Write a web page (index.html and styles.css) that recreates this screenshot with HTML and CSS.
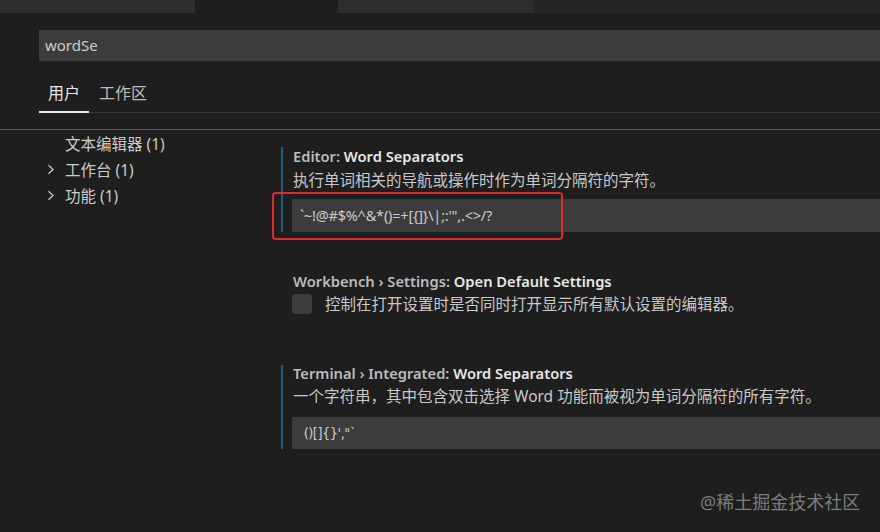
FILE: index.html
```html
<!DOCTYPE html>
<html lang="zh-CN">
<head>
<meta charset="utf-8">
<link rel="stylesheet" href="styles.css">
</head>
<body>
<div class="tabs">
  <div class="tab"></div>
  <div class="tab-gap"></div>
  <div class="tab"></div>
  <div class="tab-rest"></div>
</div>
<div class="search">wordSe</div>
<div class="scopes">
  <div class="scope active">用户</div>
  <div class="scope">工作区</div>
</div>
<div class="divider"></div>
<div class="main">
  <div class="toc">
    <div class="toc-item"><span class="chev"></span><span>文本编辑器 (1)</span></div>
    <div class="toc-item"><span class="chev"><svg width="8" height="11" viewBox="0 0 8 11"><path d="M1.5 1.2 L6 5.5 L1.5 9.8" fill="none" stroke="#c5c5c5" stroke-width="1.3"/></svg></span><span>工作台 (1)</span></div>
    <div class="toc-item"><span class="chev"><svg width="8" height="11" viewBox="0 0 8 11"><path d="M1.5 1.2 L6 5.5 L1.5 9.8" fill="none" stroke="#c5c5c5" stroke-width="1.3"/></svg></span><span>功能 (1)</span></div>
  </div>
  <div class="list">
    <div class="setting s1 modified">
      <div class="title"><span class="cat">Editor: </span><span class="label">Word Separators</span></div>
      <div class="desc">执行单词相关的导航或操作时作为单词分隔符的字符。</div>
      <div class="input">`~!@#$%^&amp;*()=+[{]}\|;:'",.&lt;&gt;/?</div>
      <div class="highlight"></div>
    </div>
    <div class="setting s2">
      <div class="title"><span class="cat">Workbench › Settings: </span><span class="label">Open Default Settings</span></div>
      <div class="check-row"><span class="checkbox"></span><span class="desc">控制在打开设置时是否同时打开显示所有默认设置的编辑器。</span></div>
    </div>
    <div class="setting s3 modified">
      <div class="title"><span class="cat">Terminal › Integrated: </span><span class="label">Word Separators</span></div>
      <div class="desc">一个字符串，其中包含双击选择 Word 功能而被视为单词分隔符的所有字符。</div>
      <div class="input mono"> ()[]{}',"`</div>
    </div>
  </div>
</div>
<div class="watermark">@稀土掘金技术社区</div>
</body>
</html>
```
FILE: styles.css
```css
html, body {
  margin: 0;
  padding: 0;
  background: #1e1e1e;
  width: 880px;
  height: 532px;
  overflow: hidden;
}
body {
  position: relative;
  font-family: "Noto Sans", "Noto Sans CJK SC", sans-serif;
  color: #cccccc;
  font-size: 15.5px;
}
.tabs {
  display: flex;
  height: 13px;
}
.tab {
  width: 195px;
  background: #2d2d2d;
}
.tab-gap {
  width: 143px;
  background: #1e1e1e;
}
.tab-rest {
  flex: 1;
  background: #252526;
}
.search {
  margin: 17px 0 0 39px;
  height: 31px;
  line-height: 31px;
  background: #3c3c3c;
  padding-left: 6px;
  font-size: 15px;
  color: #cccccc;
}
.scopes {
  margin-left: 39px;
  padding-top: 22px;
  display: flex;
  border-bottom: 1px solid #3a3a3a;
}
.scope {
  padding: 0 9px 8px 9px;
  line-height: 20px;
  font-size: 16px;
  color: #bdbdbd;
  border-bottom: 2px solid transparent;
  margin-bottom: -1px;
}
.scope + .scope {
  padding-left: 10px;
}
.scope.active {
  color: #e7e7e7;
  border-bottom-color: #e7e7e7;
}
.divider {
  margin-top: 16px;
  height: 1px;
  background: #1a6aa2;
}
.main {
  display: flex;
}
.toc {
  width: 281px;
}
.toc-item {
  display: flex;
  align-items: center;
  height: 26px;
  padding-left: 47px;
  color: #cccccc;
  font-size: 15.5px;
}
.chev {
  width: 18px;
  height: 11px;
  display: flex;
}
.list {
  flex: 1;
}
.setting {
  position: relative;
  border-left: 2px solid transparent;
  padding-left: 10px;
}
.setting.modified {
  border-left-color: #1e5c7c;
}
.s1 {
  margin-top: 17px;
}
.s2 {
  margin-top: 40px;
}
.s3 {
  margin-top: 51px;
}
.title {
  line-height: 18px;
  font-size: 14.7px;
  font-weight: 600;
  white-space: nowrap;
}
.s3 .title {
  line-height: 16px;
}
.cat {
  color: #bbbbbb;
}
.label {
  color: #e7e7e7;
}
.desc {
  margin-top: 5px;
  line-height: 20px;
  color: #c8c8c8;
  white-space: nowrap;
}
.input {
  margin-top: 9px;
  margin-left: -1px;
  height: 33px;
  line-height: 33px;
  background: #3c3c3c;
  padding-left: 8px;
  color: #cccccc;
  white-space: pre;
  font-size: 14.5px;
  letter-spacing: -0.2px;
}
.s3 .input {
  margin-top: 11px;
  height: 32px;
  line-height: 32px;
}
.mono {
  font-family: "Liberation Sans Narrow", "DejaVu Sans Condensed", "Noto Sans", sans-serif;
  letter-spacing: -0.5px;
}
.check-row {
  display: flex;
  align-items: center;
  margin-top: 4px;
  margin-left: -1px;
}
.check-row .desc {
  margin-top: 0;
}
.checkbox {
  width: 20px;
  height: 20px;
  background: #3c3c3c;
  border-radius: 3px;
  margin-right: 13px;
}
.highlight {
  position: absolute;
  left: -11px;
  top: 45px;
  width: 287px;
  height: 44px;
  border: 2px solid #e02a2a;
  border-radius: 4px;
}
.watermark {
  position: absolute;
  left: 700px;
  top: 490px;
  line-height: 24px;
  font-size: 18px;
  color: #7c7c7c;
  white-space: nowrap;
}
```
